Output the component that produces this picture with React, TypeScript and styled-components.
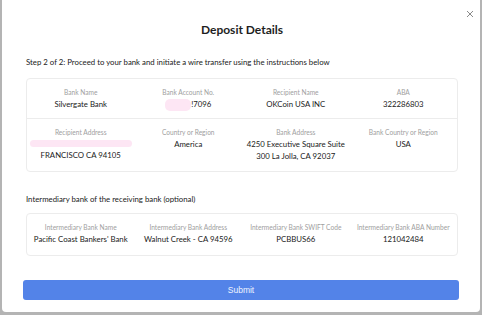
import React from "react";
import styled, { createGlobalStyle } from "styled-components";

const Global = createGlobalStyle`
  html, body { margin: 0; padding: 0; }
  body {
    background: #b4b4b4;
    width: 482px;
    height: 315px;
    overflow: hidden;
    font-family: Lato, "Open Sans", sans-serif;
  }
`;

const Backdrop = styled.div`
  width: 482px;
  height: 315px;
  padding: 0 2px 3px 2px;
  box-sizing: border-box;
`;

const Modal = styled.div`
  position: relative;
  background: #fff;
  height: 312px;
  border-radius: 0 0 4px 4px;
  box-sizing: border-box;
  padding: 21px 22px 0 24px;
  display: flex;
  flex-direction: column;
`;

const Close = styled.button`
  position: absolute;
  top: 8px;
  right: 4px;
  width: 12px;
  height: 12px;
  padding: 0;
  border: none;
  background: none;
  display: flex;
  align-items: center;
  justify-content: center;
`;

const Title = styled.h1`
  margin: 0;
  text-align: center;
  font-size: 12px;
  font-weight: 700;
  color: #1e1e1e;
  line-height: 18px;
`;

const SectionTitle = styled.div<{ $top: number }>`
  margin-top: ${(p) => p.$top}px;
  font-size: 7.8px;
  color: #1a1a1a;
  line-height: 12px;
`;

const Card = styled.div<{ $top: number }>`
  margin-top: ${(p) => p.$top}px;
  border: 1px solid #ececec;
  border-radius: 4px;
  display: flex;
  flex-direction: column;
`;

const Row = styled.div<{ $h: number; $divider?: boolean }>`
  display: grid;
  grid-template-columns: repeat(4, 1fr);
  height: ${(p) => p.$h}px;
  box-sizing: border-box;
  padding-top: 8px;
  ${(p) => (p.$divider ? "border-bottom: 1px solid #ececec;" : "")}
`;

const Cell = styled.div`
  display: flex;
  flex-direction: column;
  align-items: center;
  text-align: center;
`;

const Label = styled.div`
  font-size: 6.6px;
  color: #a0a0a0;
  line-height: 10px;
  white-space: nowrap;
`;

const Value = styled.div<{ $top?: number }>`
  margin-top: ${(p) => p.$top ?? 1}px;
  font-size: 7.8px;
  color: #1a1a1a;
  line-height: 12px;
  white-space: nowrap;
`;

const Redact = styled.span<{ $w: number; $h: number }>`
  display: inline-block;
  width: ${(p) => p.$w}px;
  height: ${(p) => p.$h}px;
  background: #fde6f4;
  border-radius: 5px;
  vertical-align: middle;
`;

const RedactLine = styled.div`
  margin-top: 3px;
  width: 102px;
  height: 7px;
  background: #fde6f4;
  border-radius: 4px;
`;

const SubmitButton = styled.button`
  margin-top: auto;
  margin-bottom: 12px;
  margin-left: -3px;
  width: 436px;
  height: 20px;
  border: none;
  border-radius: 3px;
  background: #5383e8;
  color: #eef3ff;
  font-family: "Liberation Sans", Arial, sans-serif;
  font-size: 8.5px;
  padding: 0;
`;

export default function App() {
  return (
    <>
      <Global />
      <Backdrop>
        <Modal>
          <Close aria-label="close">
            <svg width="8" height="8" viewBox="0 0 8 8">
              <path d="M1 1L7 7M7 1L1 7" stroke="#8a8a8a" strokeWidth="1" />
            </svg>
          </Close>
          <Title>Deposit Details</Title>
          <SectionTitle $top={17}>
            Step 2 of 2: Proceed to your bank and initiate a wire transfer using the instructions below
          </SectionTitle>
          <Card $top={10}>
            <Row $h={40} $divider>
              <Cell>
                <Label>Bank Name</Label>
                <Value>Silvergate Bank</Value>
              </Cell>
              <Cell>
                <Label>Bank Account No.</Label>
                <Value>
                  <Redact $w={26} $h={12} />
                  !7096
                </Value>
              </Cell>
              <Cell>
                <Label>Recipient Name</Label>
                <Value>OKCoin USA INC</Value>
              </Cell>
              <Cell>
                <Label>ABA</Label>
                <Value>322286803</Value>
              </Cell>
            </Row>
            <Row $h={52}>
              <Cell>
                <Label>Recipient Address</Label>
                <RedactLine />
                <Value $top={2}>FRANCISCO CA 94105</Value>
              </Cell>
              <Cell>
                <Label>Country or Region</Label>
                <Value>America</Value>
              </Cell>
              <Cell>
                <Label>Bank Address</Label>
                <Value>
                  4250 Executive Square Suite
                  <br />
                  300 La Jolla, CA 92037
                </Value>
              </Cell>
              <Cell>
                <Label>Bank Country or Region</Label>
                <Value>USA</Value>
              </Cell>
            </Row>
          </Card>
          <SectionTitle $top={21}>Intermediary bank of the receiving bank (optional)</SectionTitle>
          <Card $top={8}>
            <Row $h={41}>
              <Cell>
                <Label>Intermediary Bank Name</Label>
                <Value>Pacific Coast Bankers' Bank</Value>
              </Cell>
              <Cell>
                <Label>Intermediary Bank Address</Label>
                <Value>Walnut Creek - CA 94596</Value>
              </Cell>
              <Cell>
                <Label>Intermediary Bank SWIFT Code</Label>
                <Value>PCBBUS66</Value>
              </Cell>
              <Cell>
                <Label>Intermediary Bank ABA Number</Label>
                <Value>121042484</Value>
              </Cell>
            </Row>
          </Card>
          <SubmitButton>Submit</SubmitButton>
        </Modal>
      </Backdrop>
    </>
  );
}
